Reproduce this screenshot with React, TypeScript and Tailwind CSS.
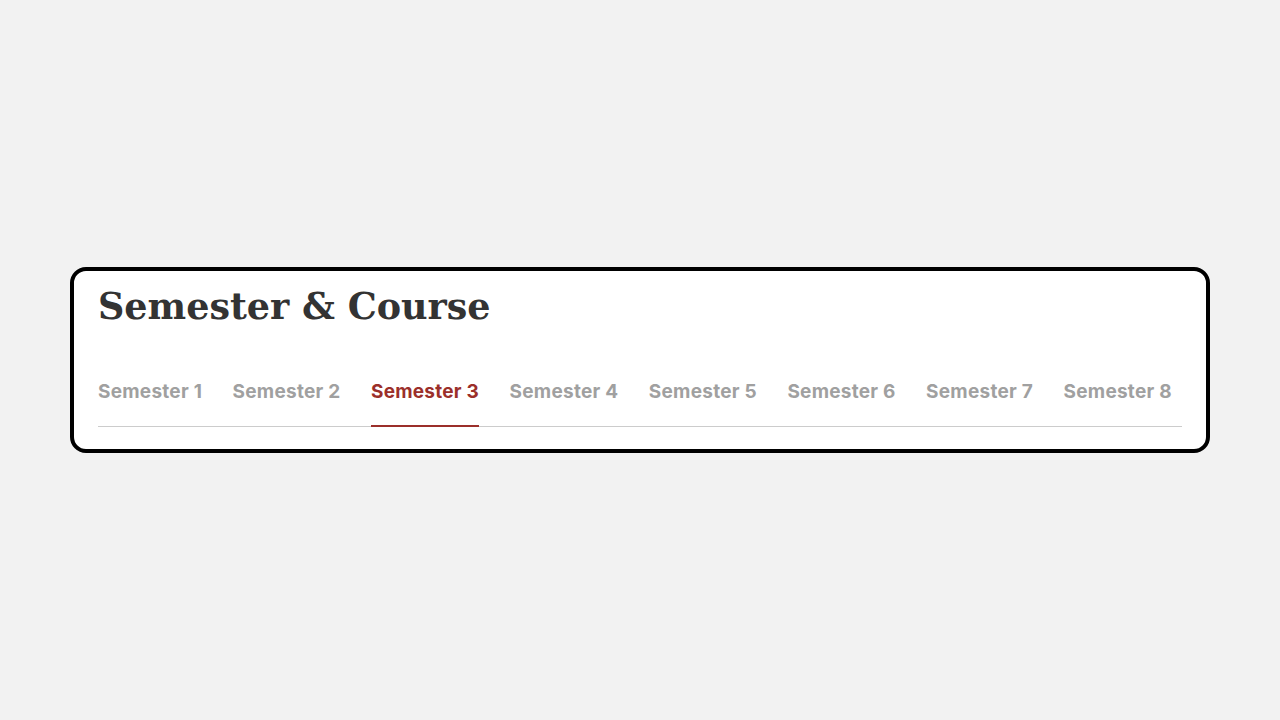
import React from "react";

export default function App() {
  const tabs = Array.from({ length: 8 }, (_, i) => `Semester ${i + 1}`);
  const active = 2;
  return (
    <div className="min-h-screen w-full bg-[#f2f2f2] flex items-center justify-center">
      <div className="w-[1140px] h-[186px] bg-white border-[4px] border-black rounded-[16px] px-[24px] pt-[10px]">
        <h1
          className="text-[36.5px] leading-[52px] font-bold text-[#333333]"
          style={{ fontFamily: '"DejaVu Serif", serif' }}
        >
          Semester &amp; Course
        </h1>
        <div
          className="mt-[46px] flex gap-[30.5px] border-b border-[#cccccc]"
          style={{ fontFamily: 'Inter, "Noto Sans", sans-serif' }}
        >
          {tabs.map((t, i) => (
            <div
              key={t}
              className={
                "shrink-0 whitespace-nowrap pb-[20px] text-[19px] leading-[26px] font-bold tracking-[0.25px] border-b-2 -mb-px " +
                (i === active
                  ? "text-[#9b2f2a] border-[#9b2f2a]"
                  : "text-[#a0a0a0] border-transparent")
              }
            >
              {t}
            </div>
          ))}
        </div>
      </div>
    </div>
  );
}
